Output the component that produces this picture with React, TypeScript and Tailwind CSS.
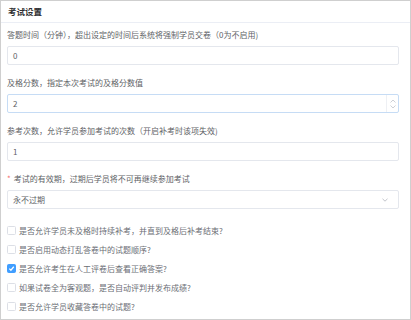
import React from "react";

const font = { fontFamily: '"Noto Sans CJK SC", "Noto Sans", sans-serif' };

function Field({
  label,
  required,
  children,
}: {
  label: string;
  required?: boolean;
  children: React.ReactNode;
}) {
  return (
    <div className="mb-[12px]">
      <div className="flex h-[12px] items-center text-[8px] leading-[12px] text-[#606266]">
        {required && <span className="mr-[3px] text-[#f56c6c]">*</span>}
        {label}
      </div>
      <div className="mt-[5px]">{children}</div>
    </div>
  );
}

function TextBox({ value, focused, spinner }: { value: string; focused?: boolean; spinner?: boolean }) {
  return (
    <div
      className={
        "relative flex h-[19px] items-center rounded-[2px] border bg-white pl-[5px] text-[8px] text-[#606266] " +
        (focused ? "border-[#c6dcf5]" : "border-[#e4e7ed]")
      }
    >
      {value}
      {spinner && (
        <div className="absolute top-0 right-0 flex h-full w-[12px] flex-col items-center justify-center border-l border-[#eef0f4] text-[#c0c4cc]">
          <svg width="6" height="4" viewBox="0 0 6 4" fill="none" stroke="currentColor" strokeWidth="0.8">
            <path d="M0.5 3.5 L3 1 L5.5 3.5" />
          </svg>
          <svg width="6" height="4" viewBox="0 0 6 4" fill="none" stroke="currentColor" strokeWidth="0.8" className="mt-[2px]">
            <path d="M0.5 0.5 L3 3 L5.5 0.5" />
          </svg>
        </div>
      )}
    </div>
  );
}

function Check({ label, checked }: { label: string; checked?: boolean }) {
  return (
    <div className="flex h-[19px] items-center text-[8px] text-[#6b6e75]">
      <span
        className={
          "mr-[3px] flex h-[9px] w-[9px] items-center justify-center rounded-[1.5px] border " +
          (checked ? "border-[#409eff] bg-[#409eff]" : "border-[#dcdfe6] bg-white")
        }
      >
        {checked && (
          <svg width="7" height="7" viewBox="0 0 8 8" fill="none" stroke="white" strokeWidth="1.4">
            <path d="M1.5 4.2 L3.3 6 L6.6 2" />
          </svg>
        )}
      </span>
      {label}
    </div>
  );
}

export default function App() {
  return (
    <div className="h-[320px] w-[411px] bg-white" style={font}>
      <div className="flex h-full flex-col border border-[#cfcfcf] bg-white">
        <div className="flex h-[22px] items-center border-b border-[#ebeef5] px-[7px] text-[8.5px] font-bold text-[#303133]">
          考试设置
        </div>
        <div className="pt-[6px] pr-[11px] pl-[6px]">
          <Field label="答题时间（分钟），超出设定的时间后系统将强制学员交卷（0为不启用)">
            <TextBox value="0" />
          </Field>
          <Field label="及格分数，指定本次考试的及格分数值">
            <TextBox value="2" focused spinner />
          </Field>
          <Field label="参考次数，允许学员参加考试的次数（开启补考时该项失效)">
            <TextBox value="1" />
          </Field>
          <Field label="考试的有效期，过期后学员将不可再继续参加考试" required>
            <div className="flex h-[19px] items-center justify-between rounded-[2px] border border-[#e4e7ed] bg-white pr-[10px] pl-[5px] text-[8px] text-[#606266]">
              永不过期
              <svg width="6" height="4" viewBox="0 0 6 4" fill="none" stroke="#b0b4bc" strokeWidth="0.8">
                <path d="M0.5 0.8 L3 3.2 L5.5 0.8" />
              </svg>
            </div>
          </Field>
          <div className="mt-[7px]">
            <Check label="是否允许学员未及格时持续补考，并直到及格后补考结束?" />
            <Check label="是否启用动态打乱答卷中的试题顺序?" />
            <Check label="是否允许考生在人工评卷后查看正确答案?" checked />
            <Check label="如果试卷全为客观题，是否自动评判并发布成绩?" />
            <Check label="是否允许学员收藏答卷中的试题?" />
          </div>
        </div>
      </div>
    </div>
  );
}
